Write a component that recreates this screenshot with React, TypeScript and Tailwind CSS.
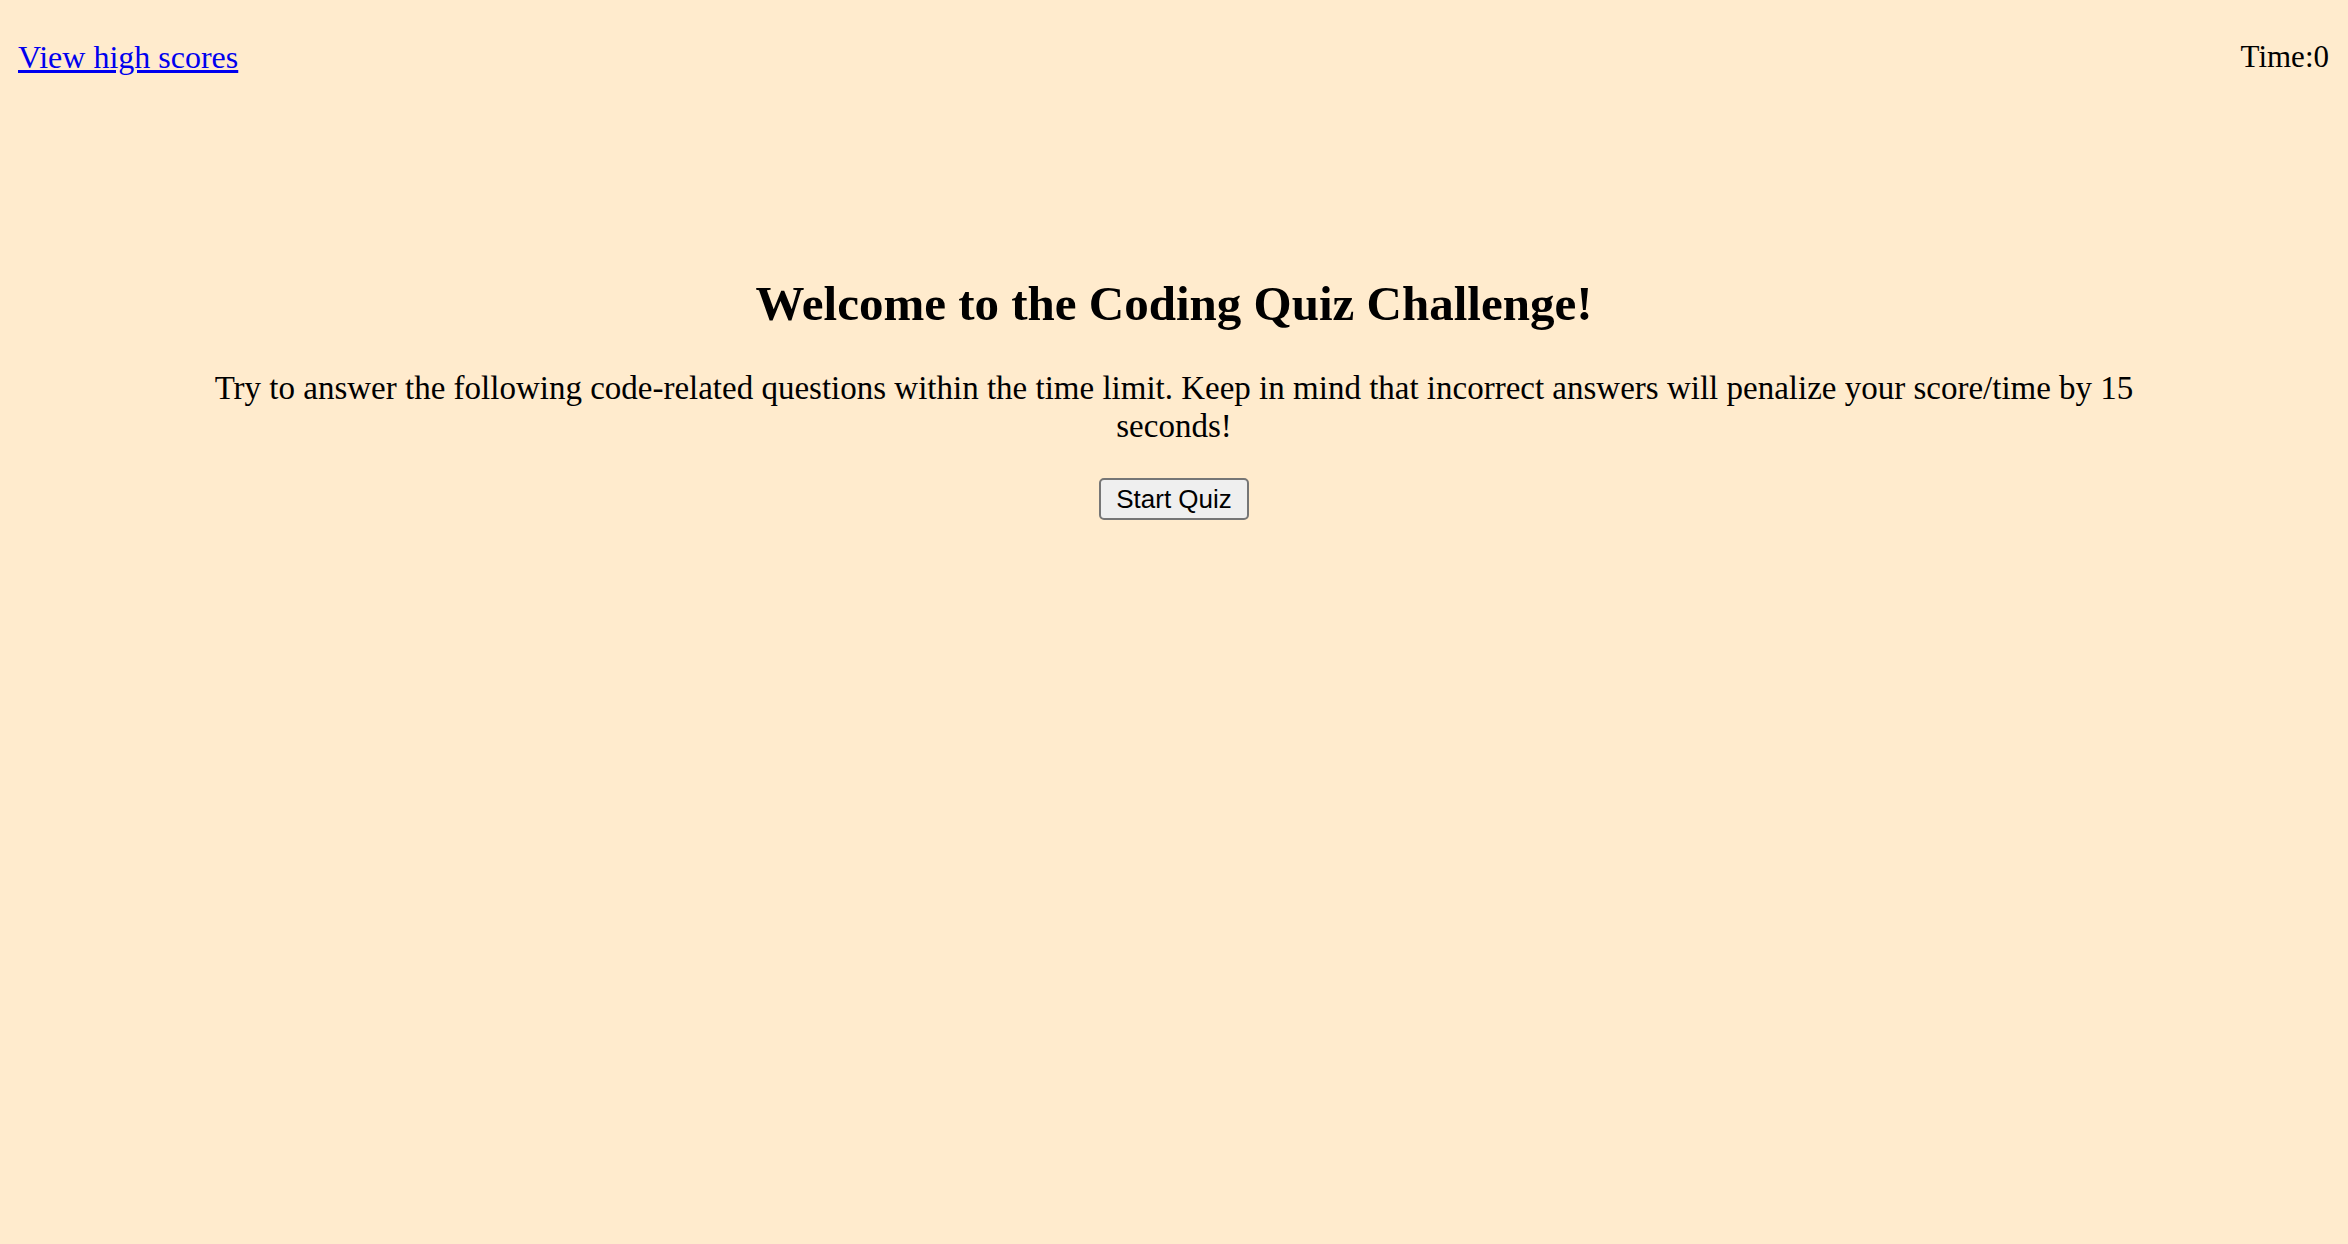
const serif = { fontFamily: '"Liberation Serif", "Times New Roman", serif' };

const App = () => {
  return (
    <div
      className="min-h-screen w-full bg-[#ffebcd] text-black leading-[1.15]"
      style={serif}
    >
      <header className="flex justify-between items-start px-[18px] pt-[39px]">
        <a href="#" className="text-[32px] text-[#0000ee] underline">
          View high scores
        </a>
        <div className="text-[31px] pr-[1px]">Time:0</div>
      </header>

      <main className="flex flex-col items-center text-center px-[190px]">
        <h1 className="mt-[200px] text-[49px] font-bold">
          Welcome to the Coding Quiz Challenge!
        </h1>
        <p className="mt-[38px] text-[33px]">
          Try to answer the following code-related questions within the time
          limit. Keep in mind that incorrect answers will penalize your
          score/time by 15 seconds!
        </p>
        <button
          type="button"
          className="mt-[32px] px-[15px] py-[4px] border-2 border-[#767676] rounded-[5px] bg-[#efefef] text-[26px] leading-[30px]"
          style={{ fontFamily: '"Liberation Sans", Arial, sans-serif' }}
        >
          Start Quiz
        </button>
      </main>
    </div>
  );
};

export default App;
